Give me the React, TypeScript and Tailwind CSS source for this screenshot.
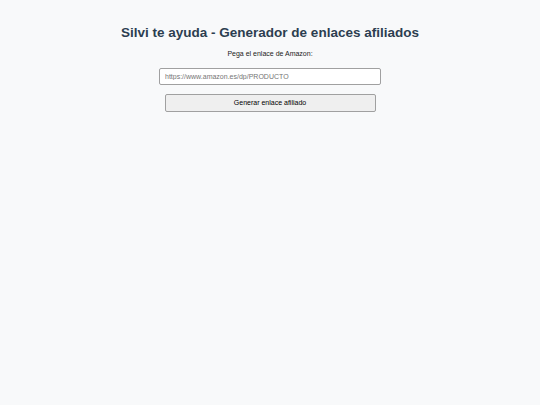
export default function App() {
  return (
    <div className="min-h-[405px] w-full bg-[#f8f9fa] font-['Liberation_Sans',Arial,sans-serif] text-black">
      <div className="flex flex-col items-center pt-[25px]">
        <h1 className="text-[13.5px] font-bold leading-[16px] text-[#2c3e50]">
          Silvi te ayuda - Generador de enlaces afiliados
        </h1>
        <label className="mt-[8px] text-[7px] leading-[9px] text-[#222]">Pega el enlace de Amazon:</label>
        <input
          className="mt-[10px] h-[17px] w-[222px] rounded-[2px] border border-[#a0a0a0] bg-white px-[5px] text-[7px] outline-none placeholder:text-[#757575]"
          placeholder="https://www.amazon.es/dp/PRODUCTO"
        />
        <button className="mt-[9px] h-[18px] w-[211px] rounded-[2px] border border-[#a0a0a0] bg-[#efefef] text-[7px] text-black">
          Generar enlace afiliado
        </button>
      </div>
    </div>
  );
}
